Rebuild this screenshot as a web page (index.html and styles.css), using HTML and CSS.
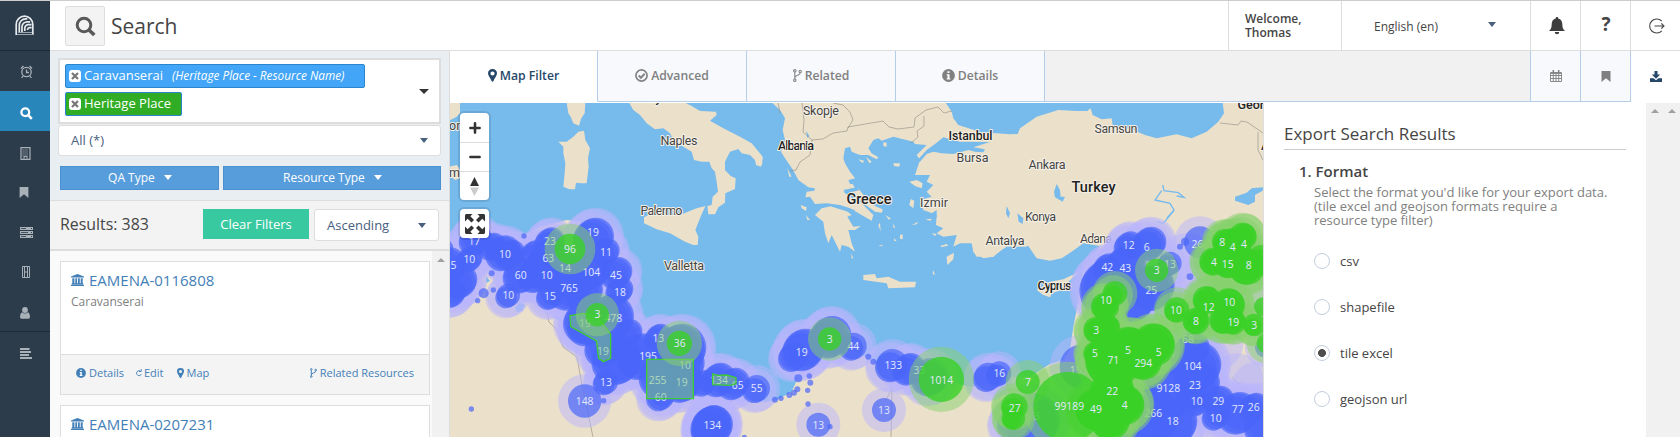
FILE: index.html
```
<!DOCTYPE html>
<html lang="en">
<head>
<meta charset="utf-8">
<title>Search</title>
<link rel="stylesheet" href="styles.css">
</head>
<body>
<div class="app">
  <nav class="sidebar">
    <a class="brand"><svg width="20" height="21" viewBox="0 0 20 21" fill="none" stroke="#e8ebee" stroke-width="1.7"><path d="M1.2 20V9.500a8.300 8.300 0 0 1 16.600 0V20M4.300 18V10.500a6.500 6.500 0 0 1 6.500-6.700h1.500M7 17V11.500a5.300 5.300 0 0 1 5.300-4.700h2.800M9.800 16v-3a3.500 3.500 0 0 1 3.700-3.300h3M12.600 15v-.5a2 2 0 0 1 2-1.800h2"/><path d="M2 19.500h16M4 17.500h13" stroke-width="1" stroke="#9aa5ae"/></svg></a>
    <a class="nav-item"><svg width="13" height="14" viewBox="0 0 13 14" fill="none" stroke="#a9b1b8" stroke-width="1.3"><circle cx="6.500" cy="7" r="4.700"/><path d="M6.500 4.500V7.500H9M1 3.500L3.500 1M12 3.500L9.500 1M3 11l-1.300 2M10 11l1.300 2"/></svg></a>
    <a class="nav-item active"><svg width="13" height="13" viewBox="0 0 13 13" fill="none" stroke="#fff" stroke-width="2.300"><circle cx="5.300" cy="5.300" r="3.900"/><path d="M8.200 8.200l3.600 3.700" stroke-width="2.600"/></svg></a>
    <a class="nav-item shift-l"><svg width="11" height="13" viewBox="0 0 11 13" fill="none" stroke="#a9b1b8"><path d="M1 .6h9v11.800H1z" stroke-width="1.200"/><path d="M2.500 3h6M2.500 5h6M2.500 7h6M2.500 9h6" stroke-dasharray="1.200 .8"/><path d="M4 12V9.500h3V12"/></svg></a>
    <a class="nav-item shift-l2"><svg width="10" height="11" viewBox="0 0 10 11" fill="#a9b1b8"><path d="M.6 0h8.800v11L5 7.200.6 11z"/></svg></a>
    <a class="nav-item"><svg width="13" height="11" viewBox="0 0 13 11" fill="#a9b1b8"><path d="M0 0h13v3H0zM0 4h13v3H0zM0 8h13v3H0z"/><path d="M1 1.500h5M1 5.500h7M1 9.500h5" stroke="#2d3c4b" stroke-width=".8"/><path d="M11 1h1v1h-1zM11 5h1v1h-1zM11 9h1v1h-1z" fill="#2d3c4b"/></svg></a>
    <a class="nav-item"><svg width="8" height="12" viewBox="0 0 8 12" fill="none" stroke="#a9b1b8"><path d="M.5.5h7v11h-7zM2.500 1v10M5.500 1v10M2.500 6h3"/></svg></a>
    <a class="nav-item shift-l"><svg width="10" height="12" viewBox="0 0 10 12" fill="#a9b1b8"><circle cx="5" cy="3" r="2.900"/><path d="M2 5.200a4 4 0 0 0 6 0C9.500 6 10 8 10 10q0 1.700-1.500 1.700h-7Q0 11.700 0 10 0 6.500 2 5.200z"/></svg></a>
    <a class="nav-item divided"><svg width="12" height="11" viewBox="0 0 12 11" stroke="#a9b1b8" stroke-width="1.900"><path d="M0 1h9.500M0 4h11M0 7h9M0 10h12"/></svg></a>
  </nav>

  <div class="main">
    <header class="topbar">
      <div class="title-icon"><svg width="21" height="21" viewBox="0 0 21 21" fill="none" stroke="#595959" stroke-width="3"><circle cx="9" cy="9" r="6.800"/><path d="M14 14l5.300 5" stroke-width="3.600"/></svg></div>
      <h1>Search</h1>
      <div class="welcome">Welcome,<br>Thomas</div>
      <div class="language"><span>English (en)</span><i class="caret"></i></div>
      <div class="tool"><svg width="16" height="18" viewBox="0 0 16 18" fill="#3d3d3d"><path d="M8 0a1.200 1.200 0 0 1 1.200 1.500C12 2 13.300 4.500 13.300 7c0 4 1 5.500 2.700 7H0c1.700-1.500 2.700-3 2.700-7C2.700 4.500 4 2 6.800 1.500A1.200 1.200 0 0 1 8 0zM5.800 15h4.400a2.200 2.200 0 0 1-4.400 0z"/></svg></div>
      <div class="tool help">?</div>
      <div class="tool"><svg width="16" height="16" viewBox="0 0 16 16" fill="none" stroke="#444" stroke-width="1.100"><path d="M12.800 3.200a7 7 0 1 0 0 9.600M5.500 8h9.500M12.300 5.300L15 8l-2.700 2.700"/></svg></div>
    </header>

    <div class="body">
      <section class="left">
        <div class="filters">
          <div class="term-box">
            <div class="chips">
              <div class="chip"><b class="x"><svg width="8" height="8" viewBox="0 0 8 8" stroke="#777" stroke-width="2.200"><path d="M1 1l6 6M7 1L1 7"/></svg></b><span>Caravanserai</span><em>(Heritage Place - Resource Name)</em></div>
              <div class="chip green"><b class="x"><svg width="8" height="8" viewBox="0 0 8 8" stroke="#777" stroke-width="2.200"><path d="M1 1l6 6M7 1L1 7"/></svg></b><span>Heritage Place</span></div>
            </div>
            <i class="caret dark"></i>
          </div>
          <div class="select"><span>All (*)</span><i class="caret"></i></div>
          <div class="type-row">
            <button class="type qa">QA Type <i class="caret white"></i></button>
            <button class="type res">Resource Type <i class="caret white"></i></button>
          </div>
        </div>
        <div class="results-bar">
          <span class="count">Results: 383</span>
          <button class="clear">Clear Filters</button>
          <div class="sort"><span>Ascending</span><i class="caret"></i></div>
        </div>
        <div class="results">
          <div class="cards">
            <article class="card">
              <div class="card-body">
                <h2><svg width="13" height="12" viewBox="0 0 13 12" fill="#4480b8"><path d="M6.500 0L13 2.500v1H0v-1zM1.300 4.200h2.100v5H1.300zM4.300 4.200h1.800v5H4.300zM7 4.200h1.800v5H7zM9.700 4.200h2v5h-2zM.8 9.300h11.400v1.100H.8zM0 10.800h13V12H0z"/></svg>EAMENA-0116808</h2>
                <p>Caravanserai</p>
              </div>
              <div class="card-foot">
                <a><svg width="10" height="10" viewBox="0 0 10 10"><circle cx="5" cy="5" r="4.900" fill="#4480b8"/><path d="M4.300 1.700h1.500v1.400H4.300zM3.700 4h2.100v3h.6v1H3.700V7h.6V5h-.6z" fill="#fff"/></svg>Details</a>
                <a class="edit"><svg width="6" height="8" viewBox="0 0 6 8" fill="none" stroke="#4480b8" stroke-width=".9"><path d="M4.700 2.300A2.500 2.500 0 1 0 5.400 5M2.800 2.500h2.400V0"/></svg>Edit</a>
                <a class="mapl"><svg width="7" height="10" viewBox="0 0 7 10" fill="#4480b8"><path fill-rule="evenodd" d="M3.500 0A3.400 3.400 0 0 1 7 3.500C7 5 5.200 7 4.300 9.500q-.8 1-1.600 0C1.800 7 0 5 0 3.500A3.400 3.400 0 0 1 3.500 0zm0 2a1.500 1.500 0 1 0 0 3 1.500 1.500 0 0 0 0-3z"/></svg>Map</a>
                <a class="rel"><svg width="7" height="10" viewBox="0 0 7 10" fill="none" stroke="#4480b8"><circle cx="1.300" cy="1.400" r=".8"/><circle cx="1.300" cy="8.600" r=".8"/><circle cx="5.700" cy="2" r=".8"/><path d="M1.300 2.200v5.600M5.700 3c0 2.500-4.400 1.500-4.400 4"/></svg>Related Resources</a>
              </div>
            </article>
            <article class="card">
              <div class="card-body">
                <h2><svg width="13" height="12" viewBox="0 0 13 12" fill="#4480b8"><path d="M6.500 0L13 2.500v1H0v-1zM1.300 4.200h2.100v5H1.300zM4.300 4.200h1.800v5H4.300zM7 4.200h1.800v5H7zM9.700 4.200h2v5h-2zM.8 9.300h11.400v1.100H.8zM0 10.800h13V12H0z"/></svg>EAMENA-0207231</h2>
              </div>
            </article>
          </div>
          <div class="scroll"><i class="up"></i></div>
        </div>
      </section>

      <section class="right">
        <div class="tabs">
          <a class="tab on"><svg width="9" height="13" viewBox="0 0 9 13" fill="#25476a"><path fill-rule="evenodd" d="M4.500 0A4.400 4.400 0 0 1 9 4.500C9 6.500 6.500 9 5.500 12q-1 1.400-2 0C2.500 9 0 6.500 0 4.500A4.400 4.400 0 0 1 4.500 0zm0 2.400a2.100 2.100 0 1 0 0 4.200 2.100 2.100 0 0 0 0-4.200z"/></svg>Map Filter</a>
          <a class="tab"><svg width="13" height="13" viewBox="0 0 13 13" fill="none" stroke="#858585"><circle cx="6.500" cy="6.500" r="5.600" stroke-width="1.700"/><path d="M3.700 6.500l2.200 2.200 3.800-4" stroke-width="2"/></svg>Advanced</a>
          <a class="tab"><svg width="9" height="13" viewBox="0 0 9 13" fill="none" stroke="#858585" stroke-width="1.100"><circle cx="1.800" cy="1.800" r="1.200"/><circle cx="1.800" cy="11.200" r="1.200"/><circle cx="7.200" cy="2.500" r="1.200"/><path d="M1.800 3v7M7.200 3.700C7.200 7 1.800 5.500 1.800 9"/></svg>Related</a>
          <a class="tab"><svg width="13" height="13" viewBox="0 0 13 13"><circle cx="6.500" cy="6.500" r="6.400" fill="#808080"/><path d="M5.500 2.200h2V4h-2zM4.700 5.200h2.800v4h.8v1.300H4.700V9.200h.8V6.500h-.8z" fill="#fff"/></svg>Details</a>
          <span class="spacer"></span>
          <a class="tab mini"><svg width="12" height="12" viewBox="0 0 12 12" fill="none" stroke="#808080" stroke-width=".9"><path d="M.5 2.500h11v9H.5zM.5 5.500h11M.5 8.500h11M3.300 4v7.500M6 4v7.500M8.700 4v7.500"/><path d="M1 3.200h10" stroke-width="1.400"/><path d="M3.300 0v2.600M8.700 0v2.600" stroke-width="1.500"/></svg></a>
          <a class="tab mini"><svg width="10" height="11" viewBox="0 0 10 11" fill="#808080"><path d="M.5 0h9v11L5 7.300.5 11z"/></svg></a>
          <a class="tab mini on last"><svg width="12" height="11" viewBox="0 0 12 11" fill="#25476a"><path d="M4.500 0h3v3.500h2.700L6 7.800 1.800 3.500h2.700zM0 7.300h3.500L6 9.300l2.500-2H12V11H0z"/></svg></a>
        </div>
        <div class="content">
          <div class="map">
            <svg class="map-canvas" width="813" height="334" viewBox="450 103 813 334">
              <g class="land">
                <g transform="translate(440 0) scale(.33333)">
                  <path d="M28 308H60V340L50 350 28 362zM28 500L38 498 50 495 58 505 60 535 45 540 28 525z"/>
                  <path d="M380 308H436L434 340 424 355 417 377 400 370 392 350 385 340z"/>
                  <path d="M355 425L380 425 400 410 415 395 432 392 436 420 450 445 444 475 446 500 440 550 425 550 408 548 405 568 388 568 370 560 374 520 376 490 370 460 370 440z"/>
                  <path d="M567 308L580 330 600 345 620 370 645 388 670 385 690 400 700 420 730 440 755 455 762 480 785 485 808 485 815 505 825 515 830 545 834 575 818 590 815 615 802 618 805 643 825 643 835 622 855 608 856 580 885 567 887 535 872 528 855 510 855 485 870 455 895 447 905 460 930 465 945 480 948 495 963 500 968 470 935 430 900 410 850 385 810 362 830 345 828 335 780 333 755 318 735 308z"/>
                  <path d="M612 652L612 670 650 688 690 700 735 725 760 735 773 735 775 710 766 690 780 655 796 618 770 625 720 645 680 645 650 632z"/>
                </g>
                <g transform="translate(760 100) scale(.33333)">
                  <path d="M36 8L60 30 75 55 68 90 75 120 63 155 75 175 98 208 115 240 145 262 165 265 163 272 140 275 136 292 150 290 165 312 200 310 240 315 270 325 305 345 335 362 340 345 325 330 300 305 270 290 250 275 285 265 280 255 268 240 285 235 270 215 255 190 250 175 255 145 270 140 275 155 300 165 325 165 350 178 355 172 335 160 325 145 340 120 355 115 365 122 400 110 430 118 460 125 465 132 500 135 470 165 480 180 465 225 510 225 500 245 520 255 500 275 515 290 480 300 490 330 530 345 528 375 550 385 530 400 550 410 590 405 580 440 600 430 635 430 640 455 670 475 700 470 725 450 740 440 800 440 800 8z"/>
                  <path d="M165 345L185 325 215 318 250 325 275 345 262 350 280 380 303 378 285 390 265 390 275 430 285 455 265 440 245 435 240 455 215 405 205 430 195 400 190 365z"/>
                  <path d="M270 272L295 265 320 298 345 318 368 328 366 338 345 335 310 310zM310 525L345 522 350 535 385 530 420 545 468 545 465 562 385 565 380 550 310 540z"/>
                  <path d="M448 245L470 240 488 250 485 265 465 258zM452 297L463 302 460 325 448 315zM560 470L582 458 580 478 562 495zM370 127L380 128 380 140 370 138zM400 190L420 190 418 200 402 198zM318 170L335 185 328 190zM295 178L312 182 308 190zM420 405L428 403 428 418 420 416zM375 345L392 355 388 360zM355 375L360 368 362 395zM455 375L475 365 470 373zM495 358L515 356 512 362zM515 400L530 402 525 408zM540 438L560 432 565 437 545 441zM520 510L525 525 518 522zM122 315L140 322 138 333 125 325zM138 345L150 360 142 360zM82 205L95 230 88 230zM355 437L368 434 366 439zM274 460L280 475 275 476zM400 370L406 385 400 382zM402 415L410 422 403 424zM0 162L8 175 6 195 0 198z"/>
                </g>
                <g transform="translate(850 210) scale(.33333)">
                  <path d="M370 125L380 140 430 140 445 122 460 108 535 108 560 145 600 152 635 145 665 125 700 100 750 108 720 150 700 175 690 240 680 300 670 350 660 420 640 450 600 462 540 500 480 500 430 520 370 530 340 525 250 515 150 485 100 490 70 450 0 420 0 690 1245 690V-330H370z"/>
                  <path d="M560 240L600 215 640 208 693 183 655 215 650 235 605 250 600 262 580 255z"/>
                </g>
                <g transform="translate(440 210) scale(.33333)">
                  <path d="M28 180L150 130 300 50 380 30 470 40 500 100 470 150 500 230 440 290 370 320 400 380 480 430 560 490 620 540 700 575 800 565 900 575 980 575 1010 570 1055 545 1075 500 1060 470 1080 430 1150 400 1260 440V690H28z"/>
                </g>
              </g>
              <g class="sea">
                <g transform="translate(850 0) scale(.33333)">
                  <path d="M287 308L305 335 310 355 325 375 365 388 400 398 440 400 480 403 503 402 510 385 560 350 625 330 680 333 712 333 722 325 728 345 755 358 785 355 788 375 850 390 885 405 920 415 980 403 1025 415 1070 395 1105 365 1122 340 1118 308z"/>
                  <path d="M612 575L620 552 630 570 632 590 645 590 638 605 615 592zM470 618L480 640 475 655 468 640zM502 640L520 655 518 672 506 665zM1155 590L1190 578 1205 565 1240 562 1238 572 1215 585 1215 605 1195 615 1155 602z"/>
                  <path class="river" d="M938 555L942 572 985 578 1002 592 980 588M935 572L915 600 960 610 972 630 950 655M972 632L940 670 920 665"/>
                </g>
                <g transform="translate(760 100) scale(.33333)">
                  <path d="M462 192L500 150 530 128 550 112 600 125 690 126 640 142 675 148 670 157 645 155 625 150 580 162 545 160 520 155 500 162 480 185zM138 92L148 108 142 114zM265 240L285 238 285 252 270 252zM250 270L290 262 300 270 260 280zM200 315L250 320 285 330 275 338 235 326zM530 330L500 350 530 352z"/>
                </g>
                <path d="M515 308l5-6 5 3-3 6-5 1zM553 316l8 2 8 4-7 1zM486 276l4 5-4 2z"/>
              </g>
              <g class="border">
                <path d="M802 103L804 120 803 132 812 140 823 139 833 133 847 131 848 127 883 121 889 127 898 129 914 127 915 118 926 110 938 107 944 113 952 111M924 116L924 126 917 131 918 137 911 143M812 140L810 155 800 162 796 170 790 171M833 103L843 105 850 112 853 120 848 128M778 103L780 113M1220 123L1238 125 1241 121 1247 122 1263 133M1258 132L1258 150 1263 160"/>
                <path d="M546 305L549 322 557 330 563 347 577 357 582 385 593 437M892 385L891 437M1232 377L1240 385M886 400L893 386"/>
              </g>
              <g class="places">
                <g class="city">
                  <text x="660.500" y="145" textLength="37">Naples</text>
                  <text x="640.500" y="215" textLength="42">Palermo</text>
                  <text x="664" y="270" textLength="40">Valletta</text>
                  <text x="803" y="115" textLength="36">Skopje</text>
                  <text x="956.500" y="162" textLength="32">Bursa</text>
                  <text x="920" y="207" textLength="28">Izmir</text>
                  <text x="1094.500" y="133" textLength="43">Samsun</text>
                  <text x="1028.500" y="169" textLength="37">Ankara</text>
                  <text x="1025" y="221" textLength="31">Konya</text>
                  <text x="985.500" y="245" textLength="39">Antalya</text>
                  <text x="1080" y="243" textLength="32">Adana</text>
                  <text x="449" y="130">on</text>
                  <text x="449" y="177">m</text>
                </g>
                <g class="country">
                  <text x="652" y="102">ly</text>
                  <text x="778" y="149.500" textLength="36">Albania</text>
                  <text x="948.500" y="140" textLength="44">Istanbul</text>
                  <text x="1037.500" y="290" textLength="34">Cyprus</text>
                  <text x="1237.500" y="109">Georgia</text>
                  <text x="1261" y="150">A</text>
                  <text class="big" x="846.500" y="203.500" textLength="45">Greece</text>
                  <text class="big" x="1071.500" y="191.500" textLength="44">Turkey</text>
                </g>
              </g>
              <g id="clusters" transform="translate(440 210) scale(.33333)"></g>
            </svg>
            <div class="controls">
              <div class="ctl zoom">
                <span><svg width="12" height="12" viewBox="0 0 12 12" stroke="#333" stroke-width="2.600" stroke-linecap="round"><path d="M6 1.400v9.200M1.400 6h9.200"/></svg></span>
                <span><svg width="12" height="12" viewBox="0 0 12 12" stroke="#333" stroke-width="2.600" stroke-linecap="round"><path d="M1.400 6h9.200"/></svg></span>
                <span><svg width="9" height="19" viewBox="0 0 9 19"><path d="M0 9L4.500 0 9 9z" fill="#333"/><path d="M0 10.500h9L4.500 19z" fill="#ccc"/></svg></span>
              </div>
              <div class="ctl full"><svg width="20" height="20" viewBox="0 0 20 20" fill="#333"><path d="M1 0h6.500L5.300 2.300 9 6 6.500 8.500 2.700 4.800 0 7.500V1zM20 1v6.500l-2.700-2.700L13.500 8.500 11 6l3.700-3.700L12.500 0H19zM0 12.500l2.700 2.700L6.500 11.500 9 14l-3.700 3.700L7.500 20H1L0 19zM20 12.500V19l-1 1h-6.500l2.200-2.300L11 14l2.500-2.500 3.800 3.700z"/></svg></div>
            </div>
          </div>
          <div class="export">
            <h3>Export Search Results</h3>
            <h4>1. Format</h4>
            <p>Select the format you'd like for your export data.<br>(tile excel and geojson formats require a<br>resource type filter)</p>
            <div class="options">
              <label><i></i>csv</label>
              <label><i></i>shapefile</label>
              <label><i class="sel"></i>tile excel</label>
              <label><i></i>geojson url</label>
            </div>
          </div>
          <div class="gutter"><i class="up"></i><i class="up"></i></div>
        </div>
      </section>
    </div>
  </div>
</div>
<script src="clusters.js"></script>
</body>
</html>
```
FILE: styles.css
```
* { box-sizing: border-box; }
body { margin: 0; font-family: "Open Sans", sans-serif; font-size: 13px; color: #454545; background: #fff; }
h1, h2, h3, h4, p { margin: 0; font-weight: 400; }
.app { display: flex; width: 1680px; height: 437px; overflow: hidden; border-top: 1px solid #ccc; }
svg { display: block; flex: none; }

.sidebar { width: 50px; flex: none; background: #2d3c4b; }
.brand { display: flex; height: 50px; align-items: center; justify-content: center; border-bottom: 1px solid #1e2a35; }
.nav-item { display: flex; height: 40px; align-items: center; justify-content: center; padding: 2px 0 0 2px; }
.nav-item.active { background: #2986ba; padding-top: 4px; }
.nav-item.shift-l { padding: 4px 0 0; }
.nav-item.shift-l2 { padding: 3px 2px 0 0; }
.divided { border-top: 1px solid #1e2a35; padding-top: 4px; }

.main { flex: 1; display: flex; flex-direction: column; min-width: 0; }
.topbar { display: flex; height: 50px; flex: none; border-bottom: 1px solid #ddd; }
.title-icon { width: 40px; height: 40px; margin: 5px 0 0 15px; border: 1px solid #ddd; border-radius: 2px; background: #f3f3f3; display: flex; align-items: center; justify-content: center; }
h1 { flex: 1; padding-left: 6px; font-size: 21px; line-height: 50px; }
.welcome { width: 113px; border-left: 1px solid #ddd; padding: 11px 0 0 16px; font-size: 12px; font-weight: 600; line-height: 14px; }
.language { width: 189px; border-left: 1px solid #ddd; display: flex; justify-content: space-between; padding: 0 34px 0 32px; line-height: 51px; font-size: 12px; }
.language .caret { margin-top: 21px; }
.tool { width: 50px; border-left: 1px solid #ddd; display: flex; align-items: center; justify-content: center; padding-left: 3px; }
.help { font-size: 19px; font-weight: 700; padding: 0 0 3px 1px; }

.caret { width: 0; height: 0; flex: none; border: 4px solid transparent; border-top: 5px solid #48607e; border-bottom: 0; }
.caret.dark { border-width: 5px 5px 0; border-top-color: #333; }
.caret.white { border-top-color: #fff; display: inline-block; margin: 0 0 2px 6px; }
.up { width: 0; height: 0; border: 4px solid transparent; border-top: 0; border-bottom: 4px solid #a0a0a0; }

.body { display: flex; flex: 1; min-height: 0; }
.left { width: 400px; flex: none; border-right: 1px solid #ddd; display: flex; flex-direction: column; }
.filters { height: 150px; flex: none; padding: 7px 8px 0; background: #e9eef2; border-bottom: 1px solid #ddd; }
.term-box { height: 66px; border: 2px solid #ddd; background: #fff; display: flex; align-items: center; justify-content: space-between; padding-right: 10px; }
.chips { display: flex; flex-direction: column; gap: 4px; align-items: flex-start; padding-left: 5px; margin-top: -2px; }
.chip { height: 24px; width: 300px; background: #42a5f8; border: 1px solid #2a85cf; border-radius: 2px; display: flex; align-items: center; padding: 0 0 2px 3px; color: #fff; font-size: 13px; }
.chip.green { background: #31ad25; width: 117px; }
.chip em { font-size: 11.800px; margin-left: 9px; }
.x { width: 12px; height: 12px; border-radius: 3px; background: #fff; display: flex; align-items: center; justify-content: center; margin: 1px 3px 0 0; }
.select { height: 31px; margin-top: 1px; background: #fff; border: 1px solid #ddd; border-radius: 3px; display: flex; align-items: center; justify-content: space-between; padding: 0 12px 1px; color: #48607e; }
.type-row { display: flex; gap: 4px; margin: 10px 0 0 2px; }
.type { height: 24px; padding: 0 0 2px; background: #579ddb; border: 1px solid #4a8fce; color: #fff; font: 12px "Open Sans", sans-serif; }
.qa { width: 159px; }
.res { width: 218px; }
.caret.white { margin-right: -1px; }
.results-bar { height: 50px; flex: none; display: flex; padding: 8px 10px 0; background: #f3f3f3; border-bottom: 2px solid #ddd; }
.count { width: 143px; font-size: 15.900px; line-height: 30px; }
.clear { width: 106px; height: 30px; border: 0; background: #38c9a1; color: #fff; font: 13px "Open Sans", sans-serif; padding: 0 0 1px; }
.sort { width: 125px; height: 32px; margin-left: 5px; border: 1px solid #ddd; border-radius: 3px; background: #fff; display: flex; align-items: center; justify-content: space-between; padding: 0 12px; color: #48607e; }
.results { display: flex; flex: 1; min-height: 0; background: #fafafa; }
.cards { width: 370px; margin: 10px 2px 0 10px; display: flex; flex-direction: column; gap: 10px; }
.card { height: 134px; flex: none; border: 1px solid #ddd; background: #fff; }
.card-body { height: 92px; padding: 8px 10px; }
.card h2 { display: flex; align-items: center; gap: 5px; font-size: 15px; line-height: 20px; color: #4480b8; }
.card p { font-size: 12px; line-height: 16px; margin-top: 4px; color: #808080; }
.card-foot { height: 40px; display: flex; align-items: center; padding: 0 15px 4px; background: #f4f4f4; border-top: 1px solid #ddd; font-size: 11px; color: #4480b8; }
.card-foot a { display: flex; align-items: center; gap: 3px; }
.card-foot .edit { margin-left: 12px; gap: 2px; }
.card-foot .mapl { margin-left: 13px; }
.card-foot .rel { margin-left: auto; }
.scroll { width: 17px; background: #f1f1f1; display: flex; justify-content: center; padding-top: 7px; }

.right { flex: 1; min-width: 0; display: flex; flex-direction: column; }
.tabs { display: flex; height: 52px; flex: none; background: linear-gradient(#f1f1f1 51px, #fff 51px); }
.tab { width: 149px; height: 51px; display: flex; align-items: center; justify-content: center; gap: 3px; padding-bottom: 1px; background: #f7f9fc; border-right: 1px solid #b5cde6; border-bottom: 1px solid #b5cde6; color: #808080; font-size: 12.200px; font-weight: 600; }
.tab:first-child { width: 148px; }
.tab.on { background: #fff; color: #25476a; border-bottom-color: #fff; }
.spacer { flex: 1; height: 51px; border-bottom: 1px solid #b5cde6; border-right: 1px solid #b5cde6; }
.tab.mini { width: 50px; padding-bottom: 0; }
.tab.last { border-right: 0; width: 49px; }
.content { display: flex; flex: 1; min-height: 0; }
.map { width: 813px; flex: none; position: relative; overflow: hidden; background: #77baec; }
.land { fill: #ebe1cb; }
.sea { fill: #77baec; }
.river { fill: none; stroke: #77baec; stroke-width: 4; }
.border { fill: none; stroke: #8d8980; stroke-width: .6; }
.places text { font-family: Roboto, sans-serif; paint-order: stroke; stroke: #f4efe5; stroke-width: 2px; stroke-linejoin: round; }
.city { font-size: 12.500px; fill: #444; }
.country { font-size: 12.500px; font-weight: 500; fill: #222; }
.big { font-size: 14.500px; }
.halo { fill: #b9b6fc; fill-opacity: .5; }
.core { fill: #4a67fa; fill-opacity: .7; }
.dot { fill: #4a67fa; fill-opacity: .7; }
.ghalo { fill: #87d26e; fill-opacity: .5; }
.gcore { fill: #3ad127; fill-opacity: .8; }
.area { fill: #78cc74; fill-opacity: .5; stroke: #3ecb35; stroke-width: 4; }
.num { font: 31px "Open Sans", sans-serif; fill: #e4e8ff; text-anchor: middle; }
.controls { position: absolute; left: 10px; top: 10px; display: flex; flex-direction: column; gap: 9px; }
.ctl { width: 29px; background: #fff; border-radius: 4px; box-shadow: 0 0 0 2px rgba(0,0,0,.1); }
.zoom span { height: 29px; display: flex; align-items: center; justify-content: center; }
.zoom span + span { border-top: 1px solid #ddd; }
.full { height: 29px; display: flex; align-items: center; justify-content: center; }

.export { flex: 1; border-left: 1px solid #ddd; padding: 21px 20px 0; background: #fff; }
.export h3 { height: 26px; border-bottom: 1px solid #ccc; font-size: 17px; line-height: 20px; }
.export h4 { margin: 11px 0 0 15px; font-size: 15px; line-height: 20px; font-weight: 600; }
.export p { margin: 4px 0 0 30px; line-height: 14px; color: #808080; font-size: 13px; white-space: nowrap; }
.options { margin: 26px 0 0 30px; display: flex; flex-direction: column; gap: 30px; }
.options label { display: flex; align-items: center; gap: 10px; height: 16px; font-size: 13px; }
.options i { width: 16px; height: 16px; border: 1px solid #c2cedd; border-radius: 50%; background: #fff; }
.options .sel { background: radial-gradient(circle, #4d4d4d 3.600px, #fff 4.300px); }
.gutter { width: 34px; flex: none; background: #f1f1f1; display: flex; justify-content: space-around; padding-top: 6px; }
```
FILE: clusters.js
```
const NS = "http://www.w3.org/2000/svg";
const layer = document.getElementById("clusters");

function add(tag, attrs, text) {
  const el = document.createElementNS(NS, tag);
  for (const k in attrs) el.setAttribute(k, attrs[k]);
  if (text) el.textContent = text;
  layer.appendChild(el);
}

// x, y, core radius
const blue = [
  [12,115,28],[20,170,55],[60,215,48],[35,250,40],[105,90,45],[88,148,36],[155,110,38],[190,130,50],[210,135,42],[242,197,50],[205,256,35],[285,195,50],
  [280,130,35],[328,98,42],[325,147,55],[320,197,45],[330,258,38],[375,175,60],[385,232,66],[454,180,55],[460,85,58],[495,128,40],[528,190,45],[538,243,38],
  [510,325,68],[435,335,62],[430,245,55],[440,350,55],[489,415,52],[498,516,36],[530,450,72],[565,370,38],[434,573,50],[600,440,66],[655,383,38],[720,420,75],
  [660,500,60],[725,517,58],[735,466,55],[662,560,40],[790,520,36],[835,510,48],[880,522,45],[950,535,40],[815,645,55],[815,650,60],[795,660,38],
  [1060,440,42],[1090,420,60],[1170,382,60],[1240,408,40],[1135,644,36],[1357,465,48],[1405,478,45],[1470,500,55],[1332,600,36],[1645,500,42],[1678,490,36],
  [1925,470,66],[2065,108,40],[2127,102,48],[2000,172,38],[2055,172,60],[2010,235,88],[2135,235,65],[2080,275,60],[2190,160,35],[2280,97,48],
  [2268,470,72],[2270,525,66],[2185,535,90],[2130,620,85],[2198,640,70],[2335,573,42],[2327,620,38],[2393,610,60],[2442,592,40],[2465,650,50],[2270,575,40],[2255,420,50],
  [2475,412,30],[1780,630,80],[1720,640,45],[2060,660,90]
];
const green = [
  [390,117,46],[472,314,35],[718,400,38],[1169,387,35],[1504,508,68],[1763,516,36],[1723,590,40],[1720,625,35],[1885,590,105],[1968,598,62],[2053,585,60],[2017,543,66],[2010,630,60],
  [2020,450,85],[1965,430,35],[2065,420,70],[2110,455,55],[2140,405,65],[1970,360,40],[2005,350,35],[1995,290,42],[2025,250,37],[2150,181,35],[2210,300,38],[2268,333,40],[2300,270,42],
  [2365,285,50],[2350,330,42],[2380,336,38],[2443,345,34],[2470,290,28],[2354,95,38],[2378,110,55],[2408,80,42],[2320,155,42],[2365,160,45],[2420,170,55],[2465,150,45],[2480,400,30]
];
// Faint halos that join the crowded clusters inland
const veil = [[2250,230,60],[2330,210,70],[2420,240,70],[2240,160,60],[2230,400,70],[2330,400,50],[2390,510,50],[2450,530,45]];
const dots = [[94,597,8],[113,272,8],[131,250,15],[160,240,8],[1005,569,9],[1023,565,8],[1048,555,9],[1062,548,9],[1072,538,9],[1075,505,12],[1108,498,8],[1111,518,9],[1103,541,8],[1104,582,8],[913,682,8],[491,572,8],[252,78,8],[155,190,9],[1170,650,8],[1285,440,9],[1300,455,9],[2235,95,12],[2250,200,10],[2220,110,9]];
const labels = [
  [40,167,"5"],[103,93,"17"],[88,148,"10"],[195,132,"10"],[242,195,"60"],[205,256,"10"],[330,94,"23"],[325,146,"63"],[320,196,"10"],[330,260,"15"],[375,174,"14"],[387,235,"765"],
  [454,186,"104"],[459,66,"19"],[498,128,"11"],[528,195,"45"],[540,248,"18"],[520,326,"478"],[435,340,"19"],[489,423,"19"],[498,516,"13"],[434,573,"148"],[624,440,"195"],[655,384,"13"],
  [735,466,"10"],[653,511,"255"],[725,517,"19"],[662,561,"60"],[837,511,"134"],[893,525,"65"],[950,536,"55"],[817,645,"134"],[1085,427,"19"],[1240,409,"44"],[1135,645,"13"],
  [1360,465,"133"],[1438,480,"33"],[1332,601,"13"],[1678,489,"16"],[1916,482,"153"],[2066,106,"12"],[2120,111,"6"],[2002,171,"42"],[2056,174,"43"],[2190,162,"13"],[2134,241,"25"],[2272,102,"26"],
  [2258,469,"104"],[2265,525,"23"],[2185,535,"9128"],[2270,574,"10"],[2335,573,"29"],[2140,611,"266"],[2198,634,"18"],[2327,625,"10"],[2393,597,"77"],[2441,591,"26"],[1790,620,"3"],[2244,388,"68"]
];
const greenLabels = [
  [390,118,"96"],[472,314,"3"],[719,401,"36"],[1169,388,"3"],[1504,510,"1014"],[1764,517,"7"],[1724,594,"27"],[1888,590,"99189"],[1968,598,"49"],[2054,586,"4"],[2017,544,"22"],
  [2020,450,"71"],[1965,430,"5"],[2064,421,"5"],[2156,426,"5"],[2110,459,"294"],[1969,361,"3"],[1998,272,"10"],[2150,182,"3"],[2208,301,"10"],[2268,334,"8"],[2306,291,"12"],[2368,277,"10"],
  [2380,336,"19"],[2443,345,"3"],[2347,98,"8"],[2378,111,"4"],[2412,104,"4"],[2322,156,"4"],[2363,163,"15"],[2426,165,"8"]
];
const areas = ["M390 317L430 310 470 318 512 372 512 445 490 455 476 445 469 393 392 350z","M620 448H760V566H620z","M818 492L835 496 860 495 888 503V522L870 526 818 524z"];

// Crowded places hold several clusters stacked almost on top of each other.
function stacked(list, step, shrink) {
  const out = [];
  list.forEach((a, i) => {
    out.push(a);
    const near = list.filter((b, j) => j !== i && Math.hypot(a[0] - b[0], a[1] - b[1]) < (a[2] + b[2]) * 0.95).length;
    if (near > 0 && a[2] < 100) out.push([a[0] - step, a[1] + step, a[2] - shrink]);
    if (near > 1 && a[2] < 100) out.push([a[0] + step, a[1] - step, a[2] - shrink]);
  });
  return out;
}

const blueAll = stacked(blue, 7, 3);
const greenAll = stacked(green, 5, 8);
veil.concat(blueAll).forEach(([cx, cy, r]) => add("circle", { class: "halo", cx, cy, r: r + 30 }));
blueAll.forEach(([cx, cy, r]) => add("circle", { class: "core", cx, cy, r }));
dots.forEach(([cx, cy, r]) => add("circle", { class: "dot", cx, cy, r }));
labels.forEach(([x, y, t]) => add("text", { class: "num", x, y: y + 11 }, t));
areas.forEach(d => add("path", { class: "area", d }));
greenAll.forEach(([cx, cy, r]) => add("circle", { class: "ghalo", cx, cy, r: r + 30 }));
greenAll.forEach(([cx, cy, r]) => add("circle", { class: "gcore", cx, cy, r }));
greenLabels.forEach(([x, y, t]) => add("text", { class: "num", x, y: y + 11 }, t));
```
